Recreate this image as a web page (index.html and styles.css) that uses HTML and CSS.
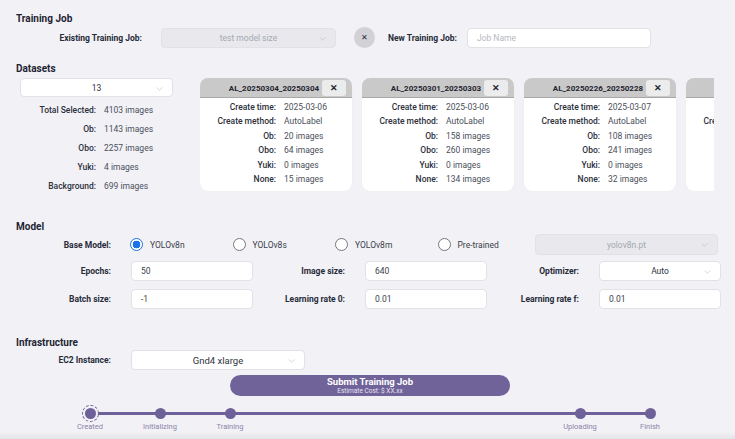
FILE: index.html
```html
<!DOCTYPE html>
<html lang="en">
<head>
    <meta charset="UTF-8">
    <title>Training Job</title>
    <link rel="stylesheet" href="styles.css">
</head>
<body>
<div class="page">
    <h2 class="section-title">Training Job</h2>
    <div class="job-row">
        <label class="lbl job-lbl">Existing Training Job:</label>
        <div class="select disabled job-select"><span>test model size</span><svg class="chev" viewBox="0 0 8 5"><polyline points="0.5,0.5 4,4 7.5,0.5"/></svg></div>
        <button class="circle-x">&#x2715;</button>
        <label class="lbl new-lbl">New Training Job:</label>
        <div class="input job-name placeholder">Job Name</div>
    </div>

    <h2 class="section-title datasets-title">Datasets</h2>
    <div class="datasets">
        <div class="ds-left">
            <div class="select ds-select"><span>13</span><svg class="chev" viewBox="0 0 8 5"><polyline points="0.5,0.5 4,4 7.5,0.5"/></svg></div>
            <div class="stats">
                <span class="k">Total Selected:</span><span class="v">4103 images</span>
                <span class="k">Ob:</span><span class="v">1143 images</span>
                <span class="k">Obo:</span><span class="v">2257 images</span>
                <span class="k">Yuki:</span><span class="v">4 images</span>
                <span class="k">Background:</span><span class="v">699 images</span>
            </div>
        </div>
        <div class="cards">
            <div class="card">
                <div class="card-head"><span class="card-title">AL_20250304_20250304</span><button class="card-x">&#x2715;</button></div>
                <div class="card-body">
                    <span class="k">Create time:</span><span class="v">2025-03-06</span>
                    <span class="k">Create method:</span><span class="v">AutoLabel</span>
                    <span class="k">Ob:</span><span class="v">20 images</span>
                    <span class="k">Obo:</span><span class="v">64 images</span>
                    <span class="k">Yuki:</span><span class="v">0 images</span>
                    <span class="k">None:</span><span class="v">15 images</span>
                </div>
            </div>
            <div class="card">
                <div class="card-head"><span class="card-title">AL_20250301_20250303</span><button class="card-x">&#x2715;</button></div>
                <div class="card-body">
                    <span class="k">Create time:</span><span class="v">2025-03-06</span>
                    <span class="k">Create method:</span><span class="v">AutoLabel</span>
                    <span class="k">Ob:</span><span class="v">158 images</span>
                    <span class="k">Obo:</span><span class="v">260 images</span>
                    <span class="k">Yuki:</span><span class="v">0 images</span>
                    <span class="k">None:</span><span class="v">134 images</span>
                </div>
            </div>
            <div class="card">
                <div class="card-head"><span class="card-title">AL_20250226_20250228</span><button class="card-x">&#x2715;</button></div>
                <div class="card-body">
                    <span class="k">Create time:</span><span class="v">2025-03-07</span>
                    <span class="k">Create method:</span><span class="v">AutoLabel</span>
                    <span class="k">Ob:</span><span class="v">108 images</span>
                    <span class="k">Obo:</span><span class="v">241 images</span>
                    <span class="k">Yuki:</span><span class="v">0 images</span>
                    <span class="k">None:</span><span class="v">32 images</span>
                </div>
            </div>
            <div class="card">
                <div class="card-head"></div>
                <div class="card-body">
                    <span class="k"></span><span class="v"></span>
                    <span class="k">Create method:</span><span class="v"></span>
                </div>
            </div>
        </div>
    </div>

    <h2 class="section-title model-title">Model</h2>
    <div class="base-row">
        <label class="lbl row-lbl">Base Model:</label>
        <div class="radios">
            <span class="radio on"><i></i>YOLOv8n</span>
            <span class="radio"><i></i>YOLOv8s</span>
            <span class="radio"><i></i>YOLOv8m</span>
            <span class="radio"><i></i>Pre-trained</span>
        </div>
        <div class="select disabled pt-select"><span>yolov8n.pt</span><svg class="chev" viewBox="0 0 8 5"><polyline points="0.5,0.5 4,4 7.5,0.5"/></svg></div>
    </div>
    <div class="params">
        <div class="param"><label class="lbl">Epochs:</label><div class="input">50</div></div>
        <div class="param"><label class="lbl">Image size:</label><div class="input">640</div></div>
        <div class="param"><label class="lbl">Optimizer:</label><div class="select"><span>Auto</span><svg class="chev" viewBox="0 0 8 5"><polyline points="0.5,0.5 4,4 7.5,0.5"/></svg></div></div>
        <div class="param"><label class="lbl">Batch size:</label><div class="input">-1</div></div>
        <div class="param"><label class="lbl">Learning rate 0:</label><div class="input">0.01</div></div>
        <div class="param"><label class="lbl">Learning rate f:</label><div class="input">0.01</div></div>
    </div>

    <h2 class="section-title infra-title">Infrastructure</h2>
    <div class="infra-row">
        <label class="lbl row-lbl">EC2 Instance:</label>
        <div class="select ec2-select"><span>Gnd4 xlarge</span><svg class="chev" viewBox="0 0 8 5"><polyline points="0.5,0.5 4,4 7.5,0.5"/></svg></div>
    </div>
    <button class="submit"><strong>Submit Training Job</strong><small>Estimate Cost: $ XX.xx</small></button>

    <div class="track">
        <div class="step current"><span class="dot"></span><span class="step-lbl">Created</span></div>
        <div class="step"><span class="dot"></span><span class="step-lbl">Initializing</span></div>
        <div class="step"><span class="dot"></span><span class="step-lbl">Training</span></div>
        <div class="step far"><span class="dot"></span><span class="step-lbl">Uploading</span></div>
        <div class="step"><span class="dot"></span><span class="step-lbl">Finish</span></div>
    </div>
</div>
</body>
</html>
```

FILE: styles.css
```css
html, body {
    margin: 0;
    height: 100%;
    overflow: hidden;
}
body {
    background: linear-gradient(to bottom, #f2f1f6 calc(100% - 7px), #e4e3e8);
    font-family: Roboto, "Liberation Sans", sans-serif;
    font-size: 8.5px;
    color: #3a3f4a;
}
.page {
    padding: 12px 16px 0 16px;
}
.section-title {
    margin: 0;
    font-size: 10px;
    font-weight: 700;
    color: #1e2433;
    line-height: 14px;
}
.lbl {
    font-weight: 700;
    color: #262b38;
    text-align: right;
}
.select, .input {
    box-sizing: border-box;
    height: 20px;
    background: #fff;
    border: 1px solid #e1e1e6;
    border-radius: 4px;
    display: flex;
    align-items: center;
}
.select {
    justify-content: center;
    position: relative;
    color: #2f3440;
}
.select.disabled {
    background: #e8e8ed;
    color: #a6a8b0;
}
.input {
    padding-left: 9px;
    color: #3a3f4a;
}
.input.placeholder {
    color: #b6b8c0;
}
.chev {
    position: absolute;
    right: 9px;
    top: 8px;
    width: 7px;
    height: 4px;
    fill: none;
    stroke: #b9bbc3;
    stroke-width: 0.8;
}

/* training job */
.job-row {
    display: flex;
    align-items: center;
    margin-top: 1px;
}
.job-lbl {
    width: 126px;
}
.job-select {
    width: 175px;
    margin-left: 19px;
}
.circle-x {
    width: 21px;
    height: 21px;
    border-radius: 50%;
    border: none;
    background: #d2d2d6;
    color: #2a2e38;
    font-size: 8px;
    padding: 0;
    margin-left: 18px;
}
.new-lbl {
    margin-left: 13px;
}
.job-name {
    width: 184px;
    margin-left: 10px;
}

/* datasets */
.datasets-title {
    margin-top: 14px;
}
.datasets {
    display: flex;
    margin-top: 2px;
}
.ds-left {
    width: 153px;
    margin-left: 4px;
}
.ds-select {
    height: 19px;
}
.stats {
    display: grid;
    grid-template-columns: 76px auto;
    column-gap: 8px;
    row-gap: 8px;
    margin-top: 8px;
    line-height: 11px;
}
.k {
    text-align: right;
    font-weight: 500;
    color: #2b303c;
    white-space: nowrap;
}
.v {
    color: #4b505b;
}
.cards {
    display: flex;
    gap: 10px;
    width: 514px;
    overflow: hidden;
    margin-left: 27px;
}
.card {
    flex: 0 0 152px;
    height: 113px;
    background: #fff;
    border-radius: 8px;
    overflow: hidden;
    box-shadow: 0 0 1px rgba(0,0,0,0.08);
}
.card-head {
    position: relative;
    height: 20px;
    background: #c9c9c9;
    border-bottom: 1px solid #a8a8a8;
    box-sizing: border-box;
    text-align: center;
    line-height: 20px;
    white-space: nowrap;
    overflow: hidden;
}
.card-title {
    font-weight: 700;
    font-size: 8px;
    color: #1f2430;
    margin-left: -4px;
}
.card-x {
    position: absolute;
    right: 6px;
    top: 2px;
    width: 24px;
    height: 16px;
    border: none;
    border-radius: 3px;
    background: #ececec;
    font-size: 9px;
    font-weight: 700;
    color: #1f2430;
    padding: 0;
}
.card-body {
    display: grid;
    grid-template-columns: 76px auto;
    column-gap: 8px;
    row-gap: 3.4px;
    padding-top: 4px;
    line-height: 11px;
}
.card-body .k:empty {
    height: 11px;
}

/* model */
.model-title {
    margin-top: 28px;
}
.base-row {
    display: flex;
    align-items: center;
    margin-top: 0;
}
.row-lbl {
    width: 95px;
}
.radios {
    display: flex;
    margin-left: 19px;
}
.radio {
    display: flex;
    align-items: center;
    width: 102.5px;
    color: #3a3f4a;
}
.radio i {
    box-sizing: border-box;
    width: 13px;
    height: 13px;
    border-radius: 50%;
    border: 1px solid #777;
    background: #fff;
    margin-right: 7px;
}
.radio.on i {
    border: 1.5px solid #1a73e8;
    background: radial-gradient(circle, #1a73e8 0, #1a73e8 3.6px, #fff 4.1px);
}
.pt-select {
    width: 183px;
    height: 21px;
    margin-left: -5px;
}
.params {
    display: grid;
    grid-template-columns: 237px 234px 234px;
    row-gap: 8px;
    margin-top: 6px;
}
.param {
    display: flex;
    align-items: center;
}
.param .lbl {
    flex: 1;
    padding-right: 20px;
}
.param .input, .param .select {
    width: 122px;
}

/* infrastructure */
.infra-title {
    margin-top: 27px;
}
.infra-row {
    display: flex;
    align-items: center;
    margin-top: 0;
}
.ec2-select {
    width: 174px;
    margin-left: 20px;
    font-size: 9.5px;
}
.submit {
    display: flex;
    flex-direction: column;
    align-items: center;
    justify-content: center;
    width: 280px;
    height: 21px;
    margin: 5px 0 0 214px;
    padding: 0;
    border: none;
    border-radius: 11px;
    background: #6f6399;
    color: #fff;
    font-family: inherit;
    line-height: 1;
}
.submit strong {
    font-size: 9.5px;
}
.submit small {
    font-size: 6.5px;
    margin-top: 2px;
    color: #e8e4f2;
}

/* progress */
.track {
    position: relative;
    display: flex;
    margin: 10px 0 0 49px;
}
.track::before {
    content: "";
    position: absolute;
    left: 25px;
    width: 560px;
    top: 6px;
    height: 3px;
    background: #6e6199;
}
.step {
    position: relative;
    width: 50px;
    display: flex;
    flex-direction: column;
    align-items: center;
    margin-right: 20px;
}
.step.far {
    margin-left: 280px;
}
.dot {
    width: 11px;
    height: 11px;
    border-radius: 50%;
    background: #6e6199;
    margin-top: 2px;
}
.current .dot {
    box-shadow: 0 0 0 2px #f2f1f6;
    outline: 1px dashed #6e6199;
    outline-offset: 2px;
}
.step-lbl {
    margin-top: 3px;
    font-size: 7.5px;
    color: #8c84a8;
}
```
